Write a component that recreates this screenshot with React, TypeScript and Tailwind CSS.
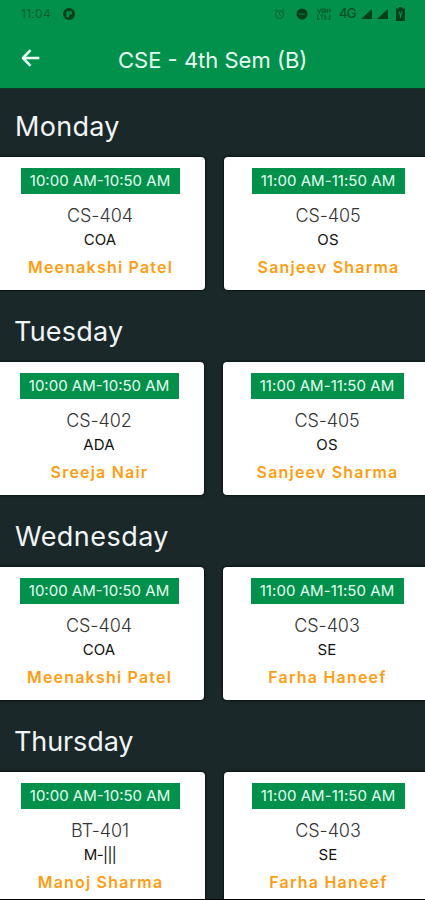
type Lecture = { time: string; code: string; subject: string; teacher: string };
type Day = { name: string; heading: string; row: string; lectures: Lecture[] };

const FIRST = '10:00 AM-10:50 AM';
const SECOND = '11:00 AM-11:50 AM';

const days: Day[] = [
  {
    name: 'Monday',
    heading: 'pl-[15px] tracking-[0.3px]',
    row: '-ml-[5px]',
    lectures: [
      { time: FIRST, code: 'CS-404', subject: 'COA', teacher: 'Meenakshi Patel' },
      { time: SECOND, code: 'CS-405', subject: 'OS', teacher: 'Sanjeev Sharma' },
    ],
  },
  {
    name: 'Tuesday',
    heading: 'pl-[14px] tracking-[0.2px]',
    row: '-ml-[6px]',
    lectures: [
      { time: FIRST, code: 'CS-402', subject: 'ADA', teacher: 'Sreeja Nair' },
      { time: SECOND, code: 'CS-405', subject: 'OS', teacher: 'Sanjeev Sharma' },
    ],
  },
  {
    name: 'Wednesday',
    heading: 'pl-[15px] tracking-[0.45px]',
    row: '-ml-[6px]',
    lectures: [
      { time: FIRST, code: 'CS-404', subject: 'COA', teacher: 'Meenakshi Patel' },
      { time: SECOND, code: 'CS-403', subject: 'SE', teacher: 'Farha Haneef' },
    ],
  },
  {
    name: 'Thursday',
    heading: 'pl-[14px] tracking-[-0.1px]',
    row: '-ml-[5px]',
    lectures: [
      { time: FIRST, code: 'BT-401', subject: 'M-|||', teacher: 'Manoj Sharma' },
      { time: SECOND, code: 'CS-403', subject: 'SE', teacher: 'Farha Haneef' },
    ],
  },
];

function StatusBar() {
  return (
    <div className="flex h-[27px] items-center pl-[21px] pr-[20px] text-[#04602a]">
      <span className="w-[31px] text-[12px] leading-none tracking-[0.3px]">11:04</span>
      <svg className="ml-[11px]" width="12" height="12" viewBox="0 0 12 12">
        <circle cx="6" cy="6" r="6" fill="#053f1a" />
        <path d="M3.5 9.3V3.2h5.3v3.3H6.3v2.8z" fill="#01914b" />
        <path d="M5.2 5h1.9" stroke="#053f1a" strokeWidth=".8" />
      </svg>

      <div className="ml-auto flex items-center">
        {/* Alarm */}
        <svg width="11" height="12" viewBox="0 0 11 12" fill="none" stroke="currentColor">
          <circle cx="5.5" cy="6.5" r="4" />
          <path d="M.7 2.5L2.7 1M10.3 2.5L8.3 1M5.5 4v2.7l1.7 1" />
        </svg>
        {/* Do not disturb */}
        <svg className="ml-[11px]" width="12" height="12" viewBox="0 0 12 12">
          <circle cx="6" cy="6" r="5.5" fill="#053f1a" />
          <path d="M3.2 6h5.6" stroke="#017a3c" strokeWidth="1.3" />
        </svg>
        {/* VoLTE */}
        <svg className="ml-[9px]" width="14" height="12" viewBox="0 0 14 12" fill="none" stroke="currentColor" strokeWidth="1.2">
          <path d="M.5.7L2.2 5 4 .7M5.3 1h2v3.7h-2zM8.8.7v4M10.5.7v4M12.8.7v4M.6 6.8v4.3h2M3.4 7h3M4.9 7v4.2M8 6.8v4.4h2M8 9h2M12.8 6.5v4.8h-1.6" />
        </svg>
        <span className="ml-[8px] w-[17px] text-[13px] font-medium leading-none tracking-[-0.8px] text-[#05501f]">4G</span>
        <svg className="ml-[5px]" width="11" height="10" viewBox="0 0 11 10">
          <path d="M11 0v10H0z" fill="#053f1a" />
        </svg>
        <svg className="ml-[5px]" width="11" height="10" viewBox="0 0 11 10">
          <path d="M11 0v10H0z" fill="#053f1a" />
        </svg>
        {/* Battery */}
        <svg className="ml-[8px]" width="9" height="14" viewBox="0 0 9 14">
          <path d="M2.8 0h3.4v1.5H9V14H0V1.5h2.8z" fill="#053f1a" />
          <path d="M3 4.5L4.5 9 6 4.5M4.5 8v3" fill="none" stroke="#01914b" strokeWidth="1.1" />
        </svg>
      </div>
    </div>
  );
}

function LectureCard({ lecture }: { lecture: Lecture }) {
  const isFirst = lecture.time === FIRST;
  const cardWidth = isFirst ? 'w-[210px]' : 'w-[208px]';
  const timeSpacing = isFirst ? 'w-[159px] tracking-[0px]' : 'w-[153px] tracking-[0.05px]';
  const subjectSpacing = lecture.subject === 'M-|||' ? 'tracking-[-0.6px]' : 'tracking-[0.1px]';

  return (
    <article
      className={`flex h-[133px] shrink-0 flex-col items-center rounded-[4px] bg-white pt-[11px] shadow-[0_0_2px_1px_#0b1414] ${cardWidth}`}
    >
      <div className={`flex h-[26px] items-center justify-center whitespace-nowrap bg-[#01914b] text-[15px] text-[#e6fff2] ${timeSpacing}`}>
        {lecture.time}
      </div>
      <div className="mt-[10px] text-[18px] font-light leading-[24px] tracking-[-0.1px] text-[#333]">{lecture.code}</div>
      <div className={`mt-[1px] text-[15px] leading-[22px] text-[#111] ${subjectSpacing}`}>{lecture.subject}</div>
      <div className="mt-[4px] pl-px text-[16px] font-semibold leading-[24px] tracking-[1.2px] text-[#ff9d0f]">{lecture.teacher}</div>
    </article>
  );
}

export default function App() {
  return (
    <div className="flex h-[900px] w-[425px] flex-col overflow-hidden border-b border-black bg-[#1b2829] font-['Inter',sans-serif]">
      <header className="h-[89px] shrink-0 border-b border-[#073d25] bg-[#01914b]">
        <StatusBar />
        <div className="grid h-[62px] grid-cols-[118px_1fr] items-center">
          <svg
            className="ml-[21px]"
            width="19"
            height="18"
            viewBox="0 0 19 18"
            fill="none"
            stroke="#e8fff3"
            strokeWidth="2.6"
            strokeLinejoin="round"
          >
            <path d="M18.3 9H2.5M9.5 1.2L2 9l7.5 7.8" />
          </svg>
          <h1 className="mt-[3px] whitespace-nowrap text-[22px] leading-none text-[#e8fff3]">CSE - 4th Sem (B)</h1>
        </div>
      </header>

      <main>
        {days.map(day => (
          <section key={day.name} className="h-[205px]">
            <h2 className={`flex h-[68px] items-center pt-[8px] text-[27px] text-[#f1f5f5] ${day.heading}`}>{day.name}</h2>
            <div className={`flex gap-[19px] ${day.row}`}>
              {day.lectures.map(lecture => (
                <LectureCard key={lecture.time} lecture={lecture} />
              ))}
            </div>
          </section>
        ))}
      </main>
    </div>
  );
}
